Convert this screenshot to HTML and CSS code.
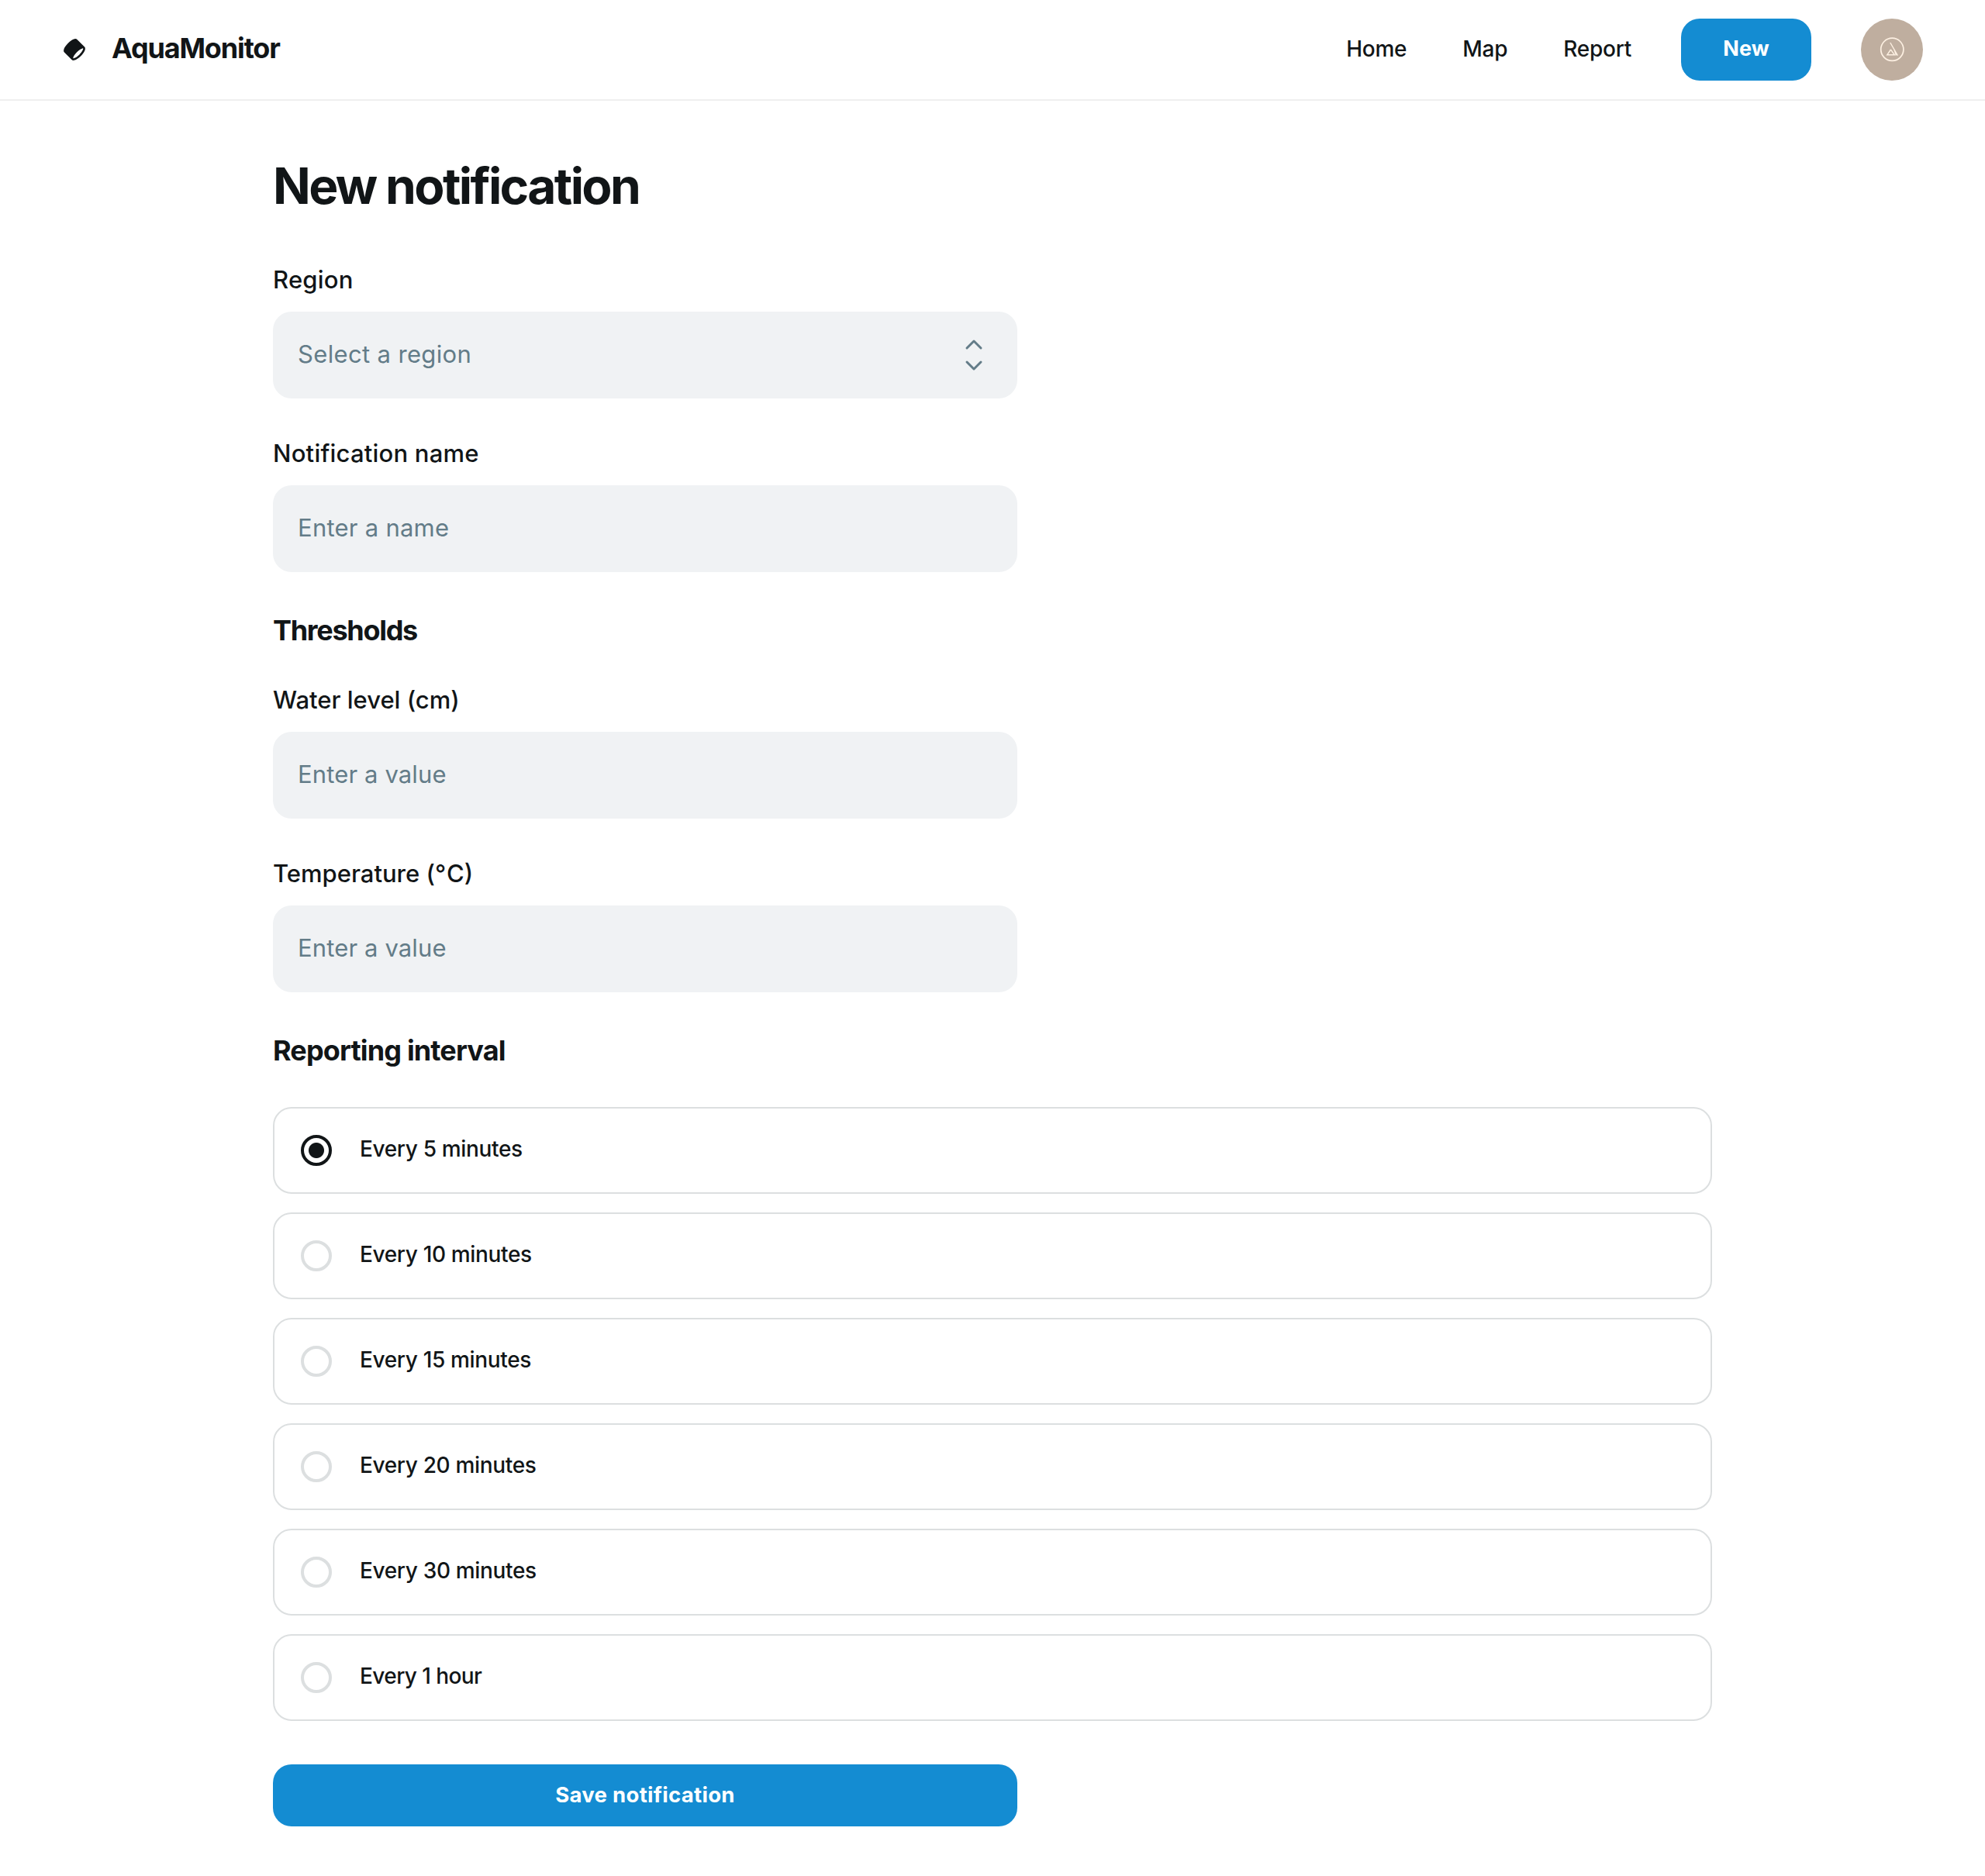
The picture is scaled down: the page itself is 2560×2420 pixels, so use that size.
FILE: index.html
```html
<!DOCTYPE html>
<html lang="en">
<head>
  <meta charset="utf-8">
  <title>AquaMonitor – New notification</title>
  <link rel="stylesheet" href="styles.css">
</head>
<body>
  <header class="header">
    <a class="brand">
      <svg class="brand-logo" viewBox="0 0 48 48" fill="currentColor" aria-hidden="true">
        <path fill-rule="evenodd" clip-rule="evenodd" d="M39.475 21.6262C40.358 21.4363 40.6863 21.5589 40.7581 21.5934C40.7876 21.655 40.8547 21.857 40.8082 22.3336C40.7408 23.0255 40.4502 24.0046 39.8572 25.2301C38.6799 27.6631 36.5085 30.6631 33.5858 33.5858C30.6631 36.5085 27.6632 38.6799 25.2301 39.8572C24.0046 40.4502 23.0255 40.7407 22.3336 40.8082C21.8571 40.8547 21.6551 40.7875 21.5934 40.7581C21.5589 40.6863 21.4363 40.358 21.6262 39.475C21.8562 38.4054 22.4689 36.9657 23.5038 35.2817C24.7575 33.2417 26.5497 30.9744 28.7621 28.762C30.9744 26.5497 33.2417 24.7574 35.2817 23.5037C36.9657 22.4689 38.4054 21.8562 39.475 21.6262ZM4.41189 29.2403L18.7597 43.5881C19.8813 44.7097 21.4027 44.9179 22.7217 44.7893C24.0585 44.659 25.5148 44.1631 26.9723 43.4579C29.9052 42.0387 33.2618 39.5667 36.4142 36.4142C39.5667 33.2618 42.0387 29.9052 43.4579 26.9723C44.1631 25.5148 44.659 24.0585 44.7893 22.7217C44.9179 21.4027 44.7097 19.8813 43.5881 18.7597L29.2403 4.41187C27.8527 3.02428 25.8765 3.02573 24.2861 3.36776C22.6081 3.72863 20.7334 4.58419 18.8396 5.74801C16.4978 7.18716 13.9881 9.18353 11.5858 11.5858C9.18354 13.988 7.18717 16.4978 5.74802 18.8396C4.58421 20.7334 3.72865 22.6081 3.36778 24.2861C3.02574 25.8765 3.02429 27.8527 4.41189 29.2403Z"/>
      </svg>
      <span class="brand-name">AquaMonitor</span>
    </a>
    <div class="header-right">
      <nav class="nav">
        <a>Home</a>
        <a>Map</a>
        <a>Report</a>
      </nav>
      <button class="button button-new" type="button">New</button>
      <div class="avatar">
        <svg class="avatar-mark" viewBox="0 0 80 80" fill="none" stroke="currentColor" aria-hidden="true">
          <circle cx="40.3" cy="39.8" r="14.6" stroke-width="1.7"/>
          <path stroke-width="1.4" d="M37.8 31 47.4 47.6M42.8 39.6 45.4 47.4M38.4 40 33.8 46.8H43.4L38.4 40"/>
        </svg>
      </div>
    </div>
  </header>

  <main class="page">
    <h1 class="title">New notification</h1>
    <form class="form">
      <div class="field">
        <span class="label">Region</span>
        <div class="control select">
          <span>Select a region</span>
          <svg class="select-icon" viewBox="0 0 256 256" fill="currentColor" aria-hidden="true">
            <path d="M181.66,170.34a8,8,0,0,1,0,11.32l-48,48a8,8,0,0,1-11.32,0l-48-48a8,8,0,0,1,11.32-11.32L128,212.69l42.34-42.35A8,8,0,0,1,181.66,170.34Zm-96-84.68L128,43.31l42.34,42.35a8,8,0,0,0,11.32-11.32l-48-48a8,8,0,0,0-11.32,0l-48,48A8,8,0,0,0,85.66,85.66Z"/>
          </svg>
        </div>
      </div>
      <div class="field">
        <label class="label" for="name">Notification name</label>
        <input class="control control-name" id="name" type="text" placeholder="Enter a name">
      </div>

      <h2 class="section-title">Thresholds</h2>
      <div class="field">
        <label class="label label-tight" for="level">Water level (cm)</label>
        <input class="control control-value" id="level" type="text" placeholder="Enter a value">
      </div>
      <div class="field">
        <label class="label label-tight" for="temperature">Temperature (<span class="degree">°</span>C)</label>
        <input class="control control-value" id="temperature" type="text" placeholder="Enter a value">
      </div>

      <h2 class="section-title section-title-interval">Reporting interval</h2>
      <div class="options">
        <label class="option"><input class="radio" type="radio" name="interval" checked><span>Every 5 minutes</span></label>
        <label class="option"><input class="radio" type="radio" name="interval"><span>Every 10 minutes</span></label>
        <label class="option"><input class="radio" type="radio" name="interval"><span>Every 15 minutes</span></label>
        <label class="option"><input class="radio" type="radio" name="interval"><span>Every 20 minutes</span></label>
        <label class="option"><input class="radio" type="radio" name="interval"><span>Every 30 minutes</span></label>
        <label class="option option-hour"><input class="radio" type="radio" name="interval"><span>Every 1 hour</span></label>
      </div>

      <button class="button button-save" type="button">Save notification</button>
    </form>
  </main>
</body>
</html>
```

FILE: styles.css
```css
:root {
  --ink: #111517;
  --muted: #637c88;
  --fill: #f0f2f4;
  --line: #dcdfe0;
  --blue: #148cd2;
}

* {
  box-sizing: border-box;
}

body {
  margin: 0;
  min-height: 2420px;
  background: #fff;
  color: var(--ink);
  font-family: "Inter", "Liberation Sans", sans-serif;
}

.header {
  display: flex;
  align-items: center;
  justify-content: space-between;
  height: 130px;
  padding: 0 80px;
  border-bottom: 2px solid #efefef;
}

.brand {
  display: flex;
  align-items: center;
  gap: 32px;
}

.brand-logo {
  width: 32px;
  height: 32px;
}

.brand-name {
  padding-bottom: 5px;
  font-size: 36px;
  font-weight: 700;
  line-height: 46px;
  letter-spacing: -1.15px;
}

.header-right {
  display: flex;
  align-items: center;
  gap: 64px;
}

.nav {
  display: flex;
  gap: 72px;
  padding-bottom: 3px;
  font-size: 28px;
  font-weight: 500;
  line-height: 42px;
  letter-spacing: -0.25px;
}

.button {
  height: 80px;
  padding: 0 0 3px;
  border: 0;
  border-radius: 24px;
  background: var(--blue);
  color: #fff;
  font-family: inherit;
  font-size: 28px;
  font-weight: 700;
}

.button-new {
  width: 168px;
  padding-bottom: 4px;
  font-size: 27px;
  letter-spacing: 0.1px;
}

.button-save {
  display: block;
  width: 960px;
  margin-top: 56px;
  font-size: 27.5px;
  letter-spacing: 0.3px;
}

.avatar {
  width: 80px;
  height: 80px;
  border-radius: 50%;
  background: #bfae9f;
  color: #fdf0e2;
}

.avatar-mark {
  display: block;
  width: 80px;
  height: 80px;
}

.page {
  width: 1856px;
  margin: 0 auto;
  padding-top: 70px;
}

.title {
  margin: 0 0 57px;
  font-size: 64px;
  font-weight: 700;
  line-height: 80px;
  letter-spacing: -2.62px;
}

.field {
  display: flex;
  flex-direction: column;
  gap: 17px;
  width: 960px;
  margin-bottom: 47px;
}

.label {
  font-size: 31px;
  font-weight: 500;
  line-height: 48px;
  letter-spacing: 0.22px;
}

.label-tight {
  letter-spacing: 0;
}

.degree {
  margin-right: 1px;
}

.control {
  width: 960px;
  height: 112px;
  padding: 0 32px 3px;
  border: 0;
  border-radius: 24px;
  background: var(--fill);
  color: var(--muted);
  font-family: inherit;
  font-size: 31px;
  line-height: 48px;
  letter-spacing: 0.35px;
}

.control-name {
  letter-spacing: 0.25px;
}

.control-value {
  letter-spacing: 0.13px;
}

.control::placeholder {
  color: var(--muted);
  opacity: 1;
}

.select {
  display: flex;
  align-items: center;
  justify-content: space-between;
}

.select-icon {
  width: 48px;
  height: 48px;
  margin-top: 3px;
}

.section-title {
  margin: 52px 0 43px;
  font-size: 36px;
  font-weight: 700;
  line-height: 46px;
  letter-spacing: -1.3px;
}

.field + .section-title {
  margin-top: 52px;
}

.section-title-interval {
  margin-bottom: 50px;
  letter-spacing: -0.85px;
}

.options {
  display: flex;
  flex-direction: column;
  gap: 24px;
}

.option {
  display: flex;
  align-items: center;
  gap: 36px;
  height: 112px;
  padding: 0 34px;
  border: 2px solid var(--line);
  border-radius: 24px;
  font-size: 28px;
  font-weight: 500;
  line-height: 42px;
  letter-spacing: -0.34px;
}

.option span {
  padding-bottom: 4px;
}

.option-hour {
  letter-spacing: -0.58px;
}

.radio {
  appearance: none;
  width: 40px;
  height: 40px;
  margin: 0;
  border: 4px solid var(--line);
  border-radius: 50%;
}

.radio:checked {
  border-color: var(--ink);
  background: radial-gradient(circle, var(--ink) 9.5px, transparent 10.5px);
}
```
